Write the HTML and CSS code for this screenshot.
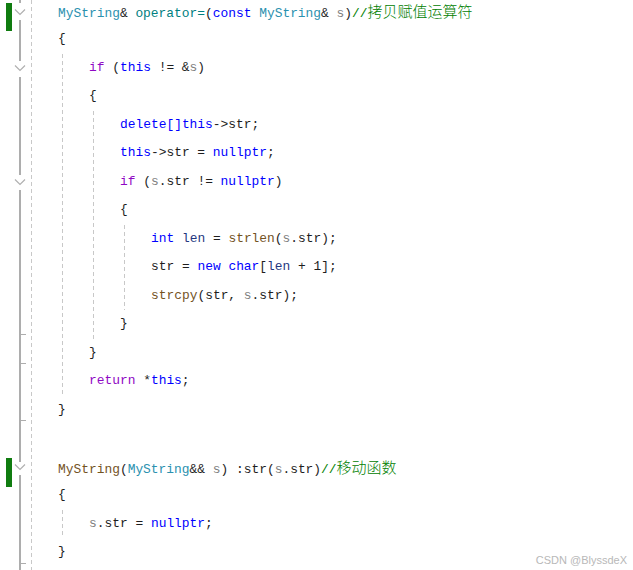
FILE: index.html
```html
<!DOCTYPE html>
<html lang="zh">
<head>
<meta charset="utf-8">
<title>MyString</title>
<link rel="stylesheet" href="styles.css">
</head>
<body>
<div class="page">
  <svg class="gutter" width="40" height="570" viewBox="0 0 40 570" aria-hidden="true">
    <rect x="6" y="3" width="6" height="28" fill="#107c10"/>
    <rect x="6" y="458" width="6" height="29" fill="#107c10"/>
    <g fill="#adadad">
      <rect x="19" y="0" width="2" height="3"/>
      <rect x="19" y="20" width="2" height="41"/>
      <rect x="19" y="77" width="2" height="98"/>
      <rect x="19" y="190" width="2" height="272"/>
      <rect x="19" y="475" width="2" height="95"/>
      <rect x="21" y="334" width="5" height="1"/>
      <rect x="21" y="363" width="5" height="1"/>
      <rect x="21" y="420" width="5" height="1"/>
      <rect x="21" y="563" width="5" height="1"/>
    </g>
    <g fill="none" stroke="#b0b0b0" stroke-width="1.2">
      <polyline points="15,9.5 20,14.5 25,9.5"/>
      <polyline points="15,65.5 20,70.5 25,65.5"/>
      <polyline points="15,179.5 20,184.5 25,179.5"/>
      <polyline points="15,464.5 20,469.5 25,464.5"/>
    </g>
    <line x1="31.5" y1="0" x2="31.5" y2="570" stroke="#c8c8c8" stroke-width="1" stroke-dasharray="4 3"/>
  </svg>
  <div class="code">
    <div class="ln"><span class="ty">MyString</span>&amp; <span class="op">operator=</span>(<span class="kw">const</span> <span class="ty">MyString</span>&amp; <span class="pa">s</span>)<span class="cm">//<span class="cjk">拷贝赋值运算符</span></span></div>
    <div class="ln">{</div>
    <div class="blk">
      <div class="ln"><span class="ct">if</span> (<span class="kw">this</span> != &amp;<span class="pa">s</span>)</div>
      <div class="ln">{</div>
      <div class="blk">
        <div class="ln"><span class="kw">delete[]this</span>-&gt;str;</div>
        <div class="ln"><span class="kw">this</span>-&gt;str = <span class="kw">nullptr</span>;</div>
        <div class="ln"><span class="ct">if</span> (<span class="pa">s</span>.str != <span class="kw">nullptr</span>)</div>
        <div class="ln">{</div>
        <div class="blk">
          <div class="ln"><span class="kw">int</span> <span class="lv">len</span> = <span class="fn">strlen</span>(<span class="pa">s</span>.str);</div>
          <div class="ln">str = <span class="kw">new</span> <span class="kw">char</span>[<span class="lv">len</span> + 1];</div>
          <div class="ln"><span class="fn">strcpy</span>(str, <span class="pa">s</span>.str);</div>
        </div>
        <div class="ln">}</div>
      </div>
      <div class="ln">}</div>
      <div class="ln"><span class="ct">return</span> *<span class="kw">this</span>;</div>
    </div>
    <div class="ln">}</div>
    <div class="ln"></div>
    <div class="ln"><span class="fn">MyString</span>(<span class="ty">MyString</span>&amp;&amp; <span class="pa">s</span>) :str(<span class="pa">s</span>.str)<span class="cm">//<span class="cjk">移动函数</span></span></div>
    <div class="ln">{</div>
    <div class="blk">
      <div class="ln"><span class="pa">s</span>.str = <span class="kw">nullptr</span>;</div>
    </div>
    <div class="ln">}</div>
  </div>
  <div class="mark">CSDN @BlyssdeX</div>
</div>
</body>
</html>
```

FILE: styles.css
```css
html, body {
  margin: 0;
  padding: 0;
  background: #ffffff;
}

.page {
  position: relative;
  display: flex;
  width: 633px;
  height: 570px;
  overflow: hidden;
}

.gutter {
  flex: 0 0 40px;
  display: block;
}

.code {
  padding-left: 18px;
  margin-top: -3.5px;
  font-family: "Liberation Mono", "DejaVu Sans Mono", monospace;
  font-size: 12.9px;
  color: #1e1e1e;
}

.ln {
  height: 28.5px;
  line-height: 28.5px;
  white-space: pre;
}

.blk {
  margin-left: 4px;
  padding-left: 27px;
  background-image: repeating-linear-gradient(to bottom, #c8c8c8 0 4px, transparent 4px 7px);
  background-size: 1px 100%;
  background-repeat: no-repeat;
  background-position: left top;
}

.kw { color: #0000ff; }
.ct { color: #8f08c4; }
.ty { color: #2b91af; }
.op { color: #008080; }
.fn { color: #74531f; }
.pa { color: #808080; }
.lv { color: #1f377f; }
.cm { color: #008000; }

.cjk {
  font-family: "Noto Sans CJK SC", sans-serif;
  font-size: 15px;
  font-weight: 300;
}

.mark {
  position: absolute;
  right: 6px;
  bottom: 4px;
  font-family: "Liberation Sans", Arial, sans-serif;
  font-size: 11px;
  color: #b8b8b8;
}
```
